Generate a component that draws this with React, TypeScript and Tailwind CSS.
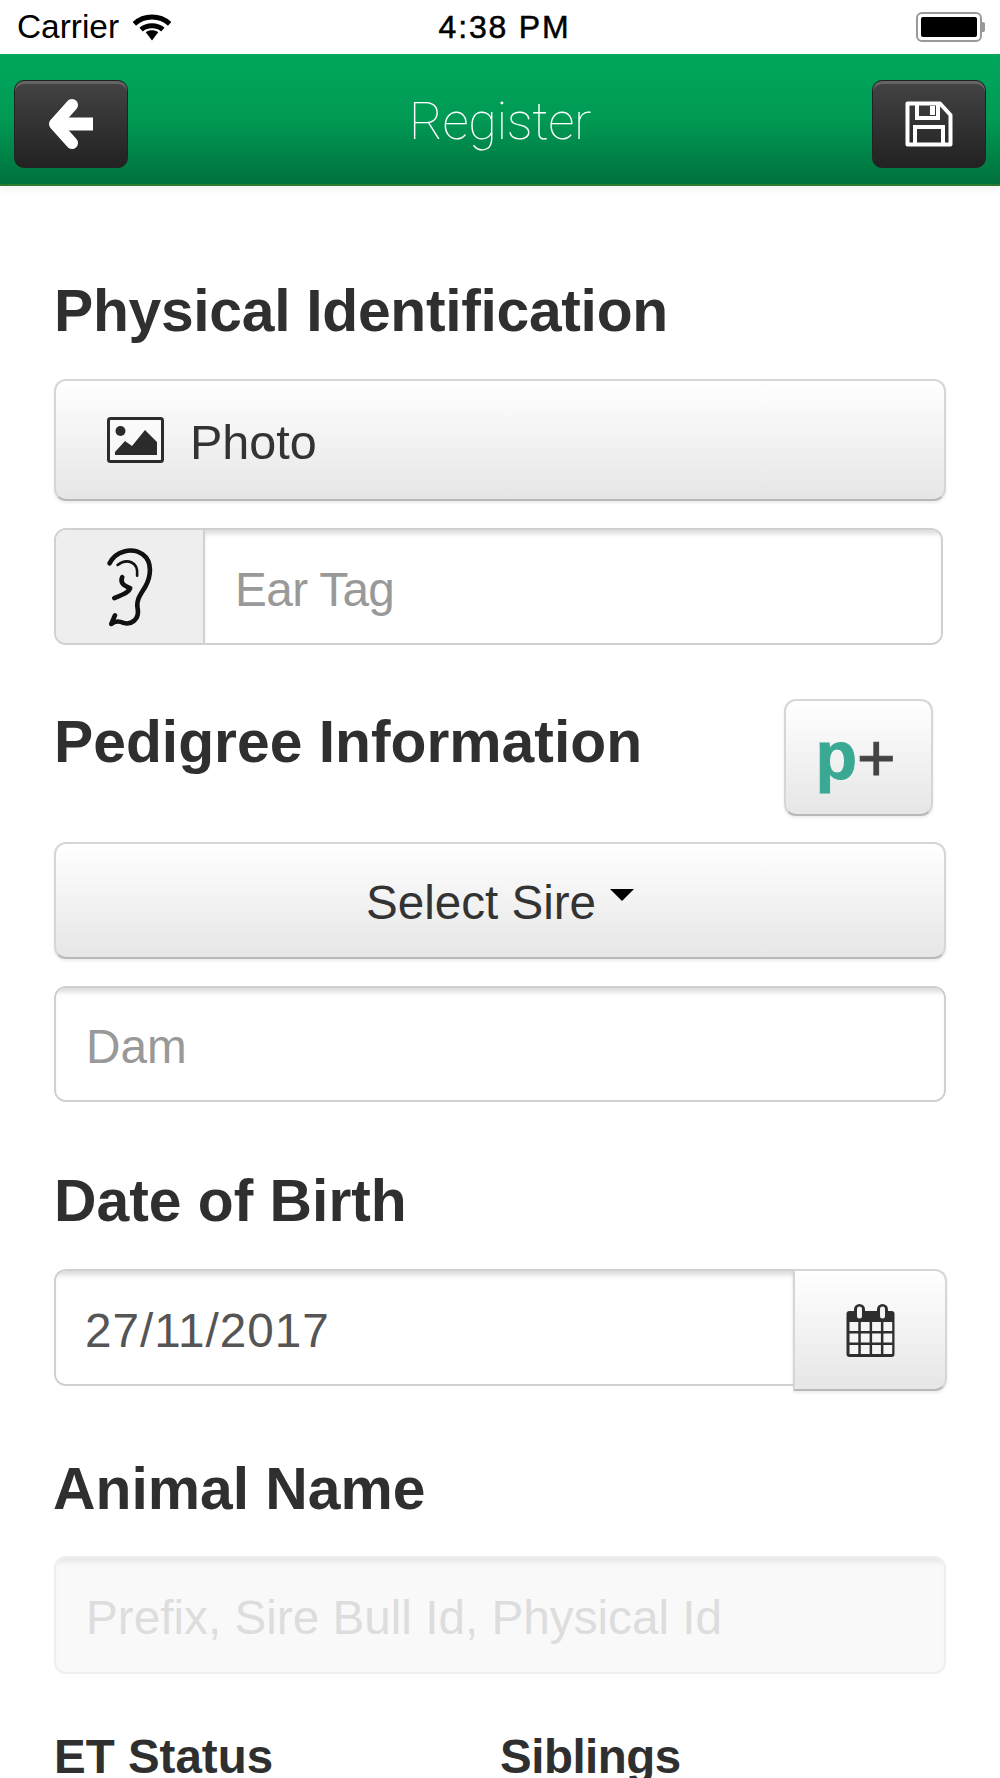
import React from "react";

const sans = "font-['Liberation_Sans',Arial,sans-serif]";
const heading = "h-[66px] text-[58.8px] leading-[66px] font-bold text-[#2f2f2f]";
const gradBtn = "bg-gradient-to-b from-white to-[#e6e6e6] border-2 border-[#d6d6d6] border-b-[#b8b8b8] rounded-[12px] shadow-[0_2px_3px_rgba(0,0,0,0.08)]";
const inputCls = "h-full min-w-0 bg-white pt-[5px] text-[47.7px] text-[#555] placeholder:text-[#999] outline-none shadow-[inset_0_6px_5px_-2px_rgba(0,0,0,0.14)]";

function Wifi() {
  return (
    <svg width="40" height="27" viewBox="0 0 38 26" className="ml-[13px]">
      <path d="M2 9.5C11.5 .8 26.5 .8 36 9.5" fill="none" stroke="#000" strokeWidth="4.8" />
      <path d="M8.5 15C14 10 24 10 29.5 15" fill="none" stroke="#000" strokeWidth="4.8" />
      <path d="M13 17.5C16.5 15 21.5 15 25 17.5L19 25.5Z" fill="#000" />
    </svg>
  );
}

function Battery() {
  return (
    <div className="flex items-center mr-[15px]">
      <div className="w-[66px] h-[30px] border-2 border-[#999] rounded-[6px] p-[3px]">
        <div className="w-full h-full bg-black rounded-[2px]" />
      </div>
      <div className="w-[3px] h-[10px] bg-[#999] rounded-r-[2px]" />
    </div>
  );
}

function ArrowLeft() {
  return (
    <svg width="46" height="50" viewBox="0 0 46 50">
      <path d="M24 6L7 25L24 44" fill="none" stroke="#fff" strokeWidth="12" strokeLinecap="round" strokeLinejoin="round" />
      <path d="M12 25H45" fill="none" stroke="#fff" strokeWidth="13" />
    </svg>
  );
}

function Floppy() {
  return (
    <svg width="48" height="46" viewBox="0 0 48 46">
      <path d="M2.5 2.5H35L45.5 14V43.5H2.5Z" fill="none" stroke="#fff" strokeWidth="4" strokeLinejoin="round" />
      <path d="M12 3V17H33V3" fill="none" stroke="#fff" strokeWidth="4" />
      <rect x="25" y="5" width="5" height="9" fill="#fff" />
      <path d="M10 43V26H38V43" fill="none" stroke="#fff" strokeWidth="4" />
    </svg>
  );
}

function ImageIcon() {
  return (
    <svg width="57" height="46" viewBox="0 0 57 46" className="shrink-0">
      <rect x="1.5" y="1.5" width="54" height="43" rx="2" fill="#fff" fillOpacity="0.5" stroke="#2b2b2b" strokeWidth="3" />
      <circle cx="13.5" cy="14" r="5" fill="#2b2b2b" />
      <path d="M8 38V35L18 24L25 29L38 13L50 25V38Z" fill="#2b2b2b" />
    </svg>
  );
}

function Ear() {
  return (
    <svg width="48" height="83" viewBox="200 530 145 250" className="ml-[2px]">
      <g fill="none" stroke="#111" strokeLinecap="round" strokeLinejoin="round">
        <path d="M208 585C225 548 275 535 308 558C338 580 333 625 316 655C300 682 287 695 293 725C297 755 272 772 250 765C235 758 225 758 213 768L224 742" strokeWidth="14" />
        <path d="M232 590C258 570 296 578 291 622" strokeWidth="8" />
        <path d="M246 627C240 642 246 650 270 660C265 675 245 680 222 690" strokeWidth="14" />
      </g>
    </svg>
  );
}

function CalendarIcon() {
  const rows = [0, 1, 2];
  const cols = [0, 1, 2, 3];
  return (
    <svg width="49" height="54" viewBox="0 0 49 54">
      <rect x="0.5" y="8" width="48" height="46" rx="3" fill="#2e2e2e" />
      <rect x="8" y="1" width="11" height="17" rx="5.5" fill="#2e2e2e" />
      <rect x="31" y="1" width="11" height="17" rx="5.5" fill="#2e2e2e" />
      <rect x="11" y="3.5" width="5" height="12" rx="2.5" fill="#f3f3f3" />
      <rect x="34" y="3.5" width="5" height="12" rx="2.5" fill="#f3f3f3" />
      {rows.map((r) =>
        cols.map((c) => (
          <rect key={`${r}-${c}`} x={3.5 + c * 11.3} y={19 + r * 11.5} width="8.8" height="9" fill="#f5f5f5" />
        ))
      )}
    </svg>
  );
}

export default function App() {
  return (
    <div className={`${sans} w-[1000px] h-[1778px] overflow-hidden bg-white text-[#333]`}>
      <div className="h-[54px] grid grid-cols-[1fr_auto_1fr] items-center bg-white text-black">
        <div className="flex items-center pl-[17px] text-[33.4px] leading-none">
          <span>Carrier</span>
          <Wifi />
        </div>
        <div className="pl-[9px] text-[32px] leading-none font-medium tracking-[1.8px] [-webkit-text-stroke:0.5px_#000]">4:38 PM</div>
        <div className="flex justify-end"><Battery /></div>
      </div>

      <header className="h-[132px] bg-gradient-to-b from-[#00a75d] via-[#009a54] to-[#00713e] border-b-2 border-[#2f7a2f] shadow-[0_4px_8px_rgba(0,0,0,0.05)] grid grid-cols-[1fr_auto_1fr] px-[14px] pt-[26px]">
        <button className="w-[114px] h-[88px] rounded-[10px] bg-gradient-to-b from-[#444] to-[#222] border border-[#222] shadow-[inset_0_3px_0_rgba(255,255,255,0.18)] flex items-center justify-center">
          <ArrowLeft />
        </button>
        <h1 className="font-['Roboto',sans-serif] font-thin text-[52px] leading-[84px] text-white tracking-[-0.4px]">Register</h1>
        <div className="flex justify-end">
          <button className="w-[114px] h-[88px] rounded-[10px] bg-gradient-to-b from-[#444] to-[#222] border border-[#222] shadow-[inset_0_3px_0_rgba(255,255,255,0.18)] flex items-center justify-center">
            <Floppy />
          </button>
        </div>
      </header>

      <main className="px-[54px]">
        <h2 className={`${heading} mt-[92px] tracking-[-0.3px]`}>Physical Identification</h2>

        <button className={`${gradBtn} mt-[35px] w-full h-[122px] flex items-center pl-[51px] text-[48.5px]`}>
          <ImageIcon />
          <span className="ml-[26px] mt-[5px]">Photo</span>
        </button>

        <div className="mt-[27px] h-[117px] w-[889px] flex border-2 border-[#d0d0d0] rounded-[12px] overflow-hidden">
          <div className="w-[149px] shrink-0 bg-[#eeeeee] border-r-2 border-[#d0d0d0] flex items-center justify-center">
            <Ear />
          </div>
          <input className={`${inputCls} flex-1 pl-[30px] tracking-[-0.6px]`} placeholder="Ear Tag" />
        </div>

        <div className="mt-[54px] h-[117px] flex justify-between items-start pr-[13px]">
          <h2 className={`${heading} mt-[10px]`}>Pedigree Information</h2>
          <button className={`${gradBtn} w-[149px] h-[117px] flex items-baseline justify-center pt-[20px] pr-[6px] leading-none`}>
            <span className="text-[68px] font-bold text-[#3aa994] leading-none [-webkit-text-stroke:1px_#3aa994]">p</span>
            <span className="text-[66px] font-normal text-[#444] leading-none translate-y-[2px] [-webkit-text-stroke:1px_#444]">+</span>
          </button>
        </div>

        <button className={`${gradBtn} mt-[26px] w-full h-[117px] flex items-center justify-center gap-[14px] text-[47.6px]`}>
          <span className="mt-[4px]">Select Sire</span>
          <span className="block w-0 h-0 mb-[12px] border-x-[12px] border-x-transparent border-t-[12px] border-t-black" />
        </button>

        <div className="mt-[27px] h-[116px] border-2 border-[#d0d0d0] rounded-[12px] overflow-hidden">
          <input className={`${inputCls} w-full pl-[30px]`} placeholder="Dam" />
        </div>

        <h2 className={`${heading} mt-[66px]`}>Date of Birth</h2>

        <div className="mt-[35px] h-[122px] flex items-start">
          <div className="w-[739px] shrink-0 h-[117px] border-2 border-r-0 border-[#d0d0d0] rounded-l-[12px] overflow-hidden">
            <input className={`${inputCls} w-full pl-[29px] tracking-[0.95px]`} defaultValue="27/11/2017" />
          </div>
          <button className={`${gradBtn} w-[154px] shrink-0 h-[122px] rounded-l-none flex items-center justify-center`}>
            <CalendarIcon />
          </button>
        </div>

        <h2 className={`${heading} mt-[65px] -ml-[1px]`}>Animal Name</h2>

        <div className="mt-[34px] h-[118px] border-2 border-[#eeeeee] rounded-[12px] overflow-hidden">
          <input
            disabled
            className="h-full w-full bg-[#f9f9f9] pt-[5px] pl-[30px] text-[47.7px] placeholder:text-[#dddddd] shadow-[inset_0_6px_5px_-2px_rgba(0,0,0,0.07)] outline-none"
            placeholder="Prefix, Sire Bull Id, Physical Id"
          />
        </div>

        <div className="mt-[55px] grid grid-cols-[446px_1fr] text-[47.5px] leading-[56px] font-bold text-[#2f2f2f]">
          <h3>ET Status</h3>
          <h3 className="tracking-[-0.5px]">Siblings</h3>
        </div>
      </main>
    </div>
  );
}
